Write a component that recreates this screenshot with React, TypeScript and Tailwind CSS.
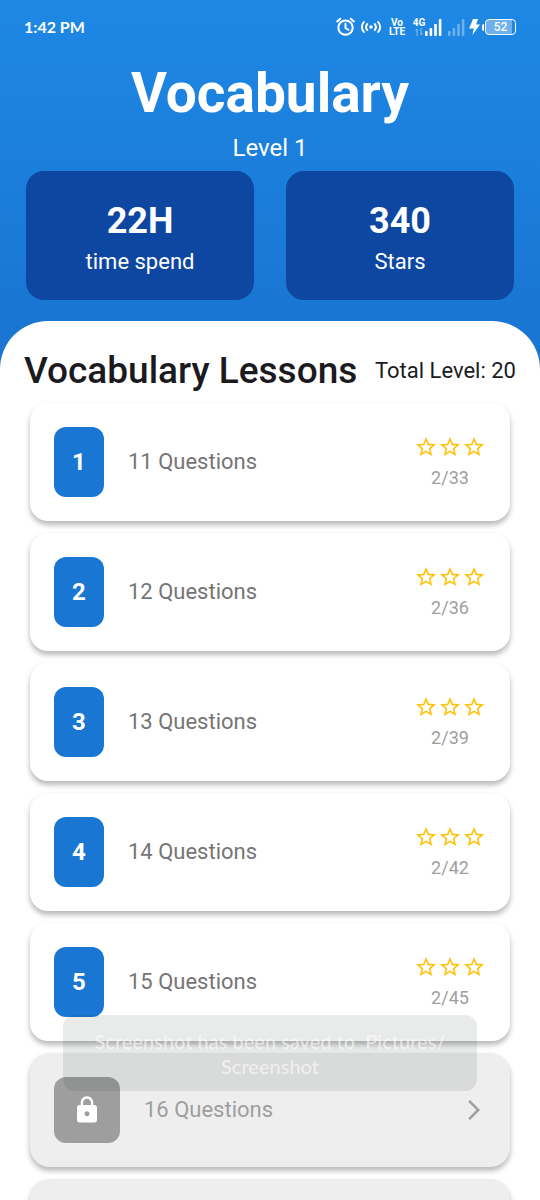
import React from "react";

type Lesson = { level: number; questions: number; score?: string };

const lessons: Lesson[] = [
  { level: 1, questions: 11, score: "2/33" },
  { level: 2, questions: 12, score: "2/36" },
  { level: 3, questions: 13, score: "2/39" },
  { level: 4, questions: 14, score: "2/42" },
  { level: 5, questions: 15, score: "2/45" },
  { level: 6, questions: 16 },
];

function Signal({ className }: { className: string }) {
  return (
    <svg viewBox="0 0 17 17" className={className} fill="currentColor" aria-hidden="true">
      <rect x="0" y="12" width="2.6" height="5" rx="0.8" />
      <rect x="4.6" y="9" width="2.6" height="8" rx="0.8" />
      <rect x="9.2" y="5" width="2.6" height="12" rx="0.8" />
      <rect x="13.8" y="0" width="2.6" height="17" rx="0.8" />
    </svg>
  );
}

function StatusBar() {
  return (
    <div className="flex h-[54px] items-center justify-between px-6 text-white">
      <time className="font-[Lato,sans-serif] text-base font-bold">1:42 PM</time>
      <div className="flex items-center">
        <svg viewBox="0 0 20 20" className="size-5" fill="none" stroke="currentColor" strokeWidth="2" strokeLinecap="round" aria-hidden="true">
          <circle cx="10.5" cy="10.6" r="7.2" />
          <path d="M10.5 6.8v4.2l3 1.8M2.2 4.4 5.2 1.7M18.8 4.4 15.8 1.7" />
        </svg>
        <svg viewBox="0 0 22 20" className="ml-[5px] h-5 w-[22px]" fill="none" stroke="currentColor" strokeWidth="2" strokeLinecap="round" aria-hidden="true">
          <circle cx="11" cy="10" r="1.8" fill="currentColor" stroke="none" />
          <path d="M7.2 7a4.8 4.8 0 0 0 0 6M14.8 7a4.8 4.8 0 0 1 0 6M3.8 5a8.2 8.2 0 0 0 0 10M18.2 5a8.2 8.2 0 0 1 0 10" />
        </svg>
        <div className="ml-[7px] flex w-4 flex-col items-center text-[10px] leading-[9px] font-bold">
          <span>Vo</span>
          <span>LTE</span>
        </div>
        <div className="ml-2 flex h-[18px] w-3 flex-col items-center">
          <span className="text-[10px] leading-[9px] font-bold">4G</span>
          <svg viewBox="0 0 8 8" className="mt-px size-2 opacity-50" fill="none" stroke="currentColor" strokeWidth="1" aria-hidden="true">
            <path d="M2 8V1L.5 3M6 0v7l1.5-2" />
          </svg>
        </div>
        <Signal className="size-[17px]" />
        <Signal className="ml-[6px] size-[17px] opacity-35" />
        <svg viewBox="0 0 11 16" className="ml-1 h-4 w-[11px]" fill="currentColor" aria-hidden="true">
          <path d="M4 0h5L7.2 5.4H11L3.4 16l1.4-6.6H.2z" />
        </svg>
        <div className="ml-[2px] flex items-center gap-px">
          <span className="h-[7px] w-[2px] rounded-l bg-white" />
          <span className="flex h-4 w-[31px] items-center justify-center rounded-[4px] border border-white bg-linear-to-l from-transparent from-10% via-white/35 via-10% to-white/35 text-xs leading-3 font-medium">
            52
          </span>
        </div>
      </div>
    </div>
  );
}

function Stat({ value, label }: { value: string; label: string }) {
  return (
    <div className="flex flex-1 flex-col items-center rounded-[18px] bg-[#0d47a1] px-4 pt-7 pb-6 text-white">
      <strong className="text-[36px] leading-[44px] font-bold">{value}</strong>
      <span className="mt-1 text-[22px] leading-[29px]">{label}</span>
    </div>
  );
}

function Star() {
  return (
    <svg viewBox="0 0 24 24" className="size-6 text-[#ffc107]" fill="currentColor" aria-hidden="true">
      <path d="M22 9.24l-7.19-.62L12 2 9.19 8.63 2 9.24l5.46 4.73L5.82 21 12 17.27 18.18 21l-1.63-7.03L22 9.24zM12 15.4l-3.76 2.27 1-4.28-3.32-2.88 4.38-.38L12 6.1l1.71 4.04 4.38.38-3.32 2.88 1 4.28L12 15.4z" />
    </svg>
  );
}

function OpenLesson({ level, questions, score }: Lesson) {
  return (
    <button type="button" className="flex w-full items-center rounded-[18px] bg-white p-6 text-left shadow-[0_4px_5px_rgba(0,0,0,0.20),0_3px_7px_rgba(0,0,0,0.10)]">
      <span className="flex h-[70px] w-[50px] items-center justify-center rounded-xl bg-[#1976d2] text-2xl font-bold text-white">
        {level}
      </span>
      <span className="ml-6 flex-1 text-[22px] leading-8 text-[#757575]">{questions} Questions</span>
      <span className="flex flex-col items-center">
        <span className="flex">
          <Star />
          <Star />
          <Star />
        </span>
        <span className="mt-[7px] text-lg leading-6 text-[#9e9e9e]">{score}</span>
      </span>
    </button>
  );
}

function LockedLesson({ questions }: Lesson) {
  return (
    <button type="button" className="flex w-full items-center rounded-[20px] bg-[#eeeeee] p-6 text-left shadow-[0_4px_5px_rgba(0,0,0,0.20),0_3px_7px_rgba(0,0,0,0.10)]">
      <span className="flex size-[66px] items-center justify-center rounded-xl bg-[#9e9e9e]">
        <svg viewBox="0 0 24 24" className="size-[30px] text-white" fill="currentColor" aria-hidden="true">
          <path d="M18 8h-1V6c0-2.76-2.24-5-5-5S7 3.24 7 6v2H6c-1.1 0-2 .9-2 2v10c0 1.1.9 2 2 2h12c1.1 0 2-.9 2-2V10c0-1.1-.9-2-2-2zm-6 9c-1.1 0-2-.9-2-2s.9-2 2-2 2 .9 2 2-.9 2-2 2zm3.1-9H8.9V6c0-1.71 1.39-3.1 3.1-3.1 1.71 0 3.1 1.39 3.1 3.1v2z" />
        </svg>
      </span>
      <span className="ml-6 flex-1 text-[22px] leading-8 text-[#9e9e9e]">{questions} Questions</span>
      <svg viewBox="0 0 24 24" className="size-6 text-[#9e9e9e]" fill="currentColor" aria-hidden="true">
        <path d="M6.23 20.23 8 22l10-10L8 2 6.23 3.77 14.46 12z" />
      </svg>
    </button>
  );
}

export default function App() {
  return (
    <div className="relative flex h-screen flex-col overflow-hidden bg-[#1976d2] font-[Roboto,sans-serif]">
      <header className="bg-linear-to-b from-[#1e88e5] to-[#1976d2]">
        <StatusBar />
        <h1 className="pt-1 text-center text-[55px] leading-[70px] font-bold text-white">Vocabulary</h1>
        <p className="pt-1 text-center text-2xl leading-8 text-white">Level 1</p>
        <div className="flex gap-8 px-[26px] pt-[7px] pb-[21px]">
          <Stat value="22H" label="time spend" />
          <Stat value="340" label="Stars" />
        </div>
      </header>

      <main className="flex min-h-0 flex-1 flex-col overflow-hidden rounded-t-[48px] bg-white pt-[26px]">
        <div className="flex items-center justify-between px-6 text-[#1b1b1f]">
          <h2 className="text-[37px] leading-12 font-medium">Vocabulary Lessons</h2>
          <span className="text-[22px] leading-8">Total Level: 20</span>
        </div>
        <ol className="flex min-h-0 flex-1 flex-col gap-3 overflow-y-auto px-[30px] pt-2 pb-6 [scrollbar-width:none]">
          {lessons.map((lesson) => (
            <li key={lesson.level}>
              {lesson.score ? <OpenLesson {...lesson} /> : <LockedLesson {...lesson} />}
            </li>
          ))}
          <li
            aria-hidden="true"
            className="h-[114px] shrink-0 rounded-[20px] bg-[#eeeeee] shadow-[0_4px_5px_rgba(0,0,0,0.20),0_3px_7px_rgba(0,0,0,0.10)]"
          />
        </ol>
      </main>

      <div
        role="status"
        className="absolute inset-x-[63px] bottom-[109px] rounded-xl bg-[#28322d]/10 px-6 pt-[14px] pb-3 text-center font-[Lato,sans-serif] text-xl leading-[25px] font-medium text-white/60"
      >
        Screenshot has been saved to&nbsp; Pictures/ Screenshot
      </div>
    </div>
  );
}
